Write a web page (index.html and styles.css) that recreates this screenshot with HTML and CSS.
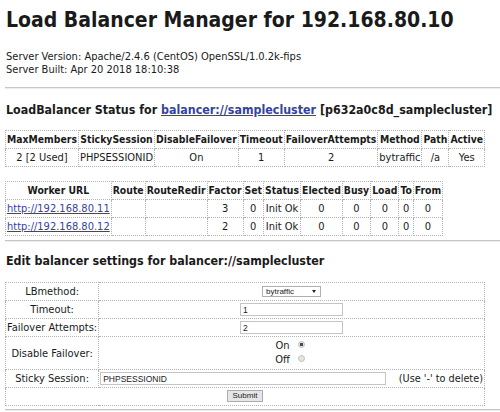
FILE: index.html
```html
<!DOCTYPE html>
<html>
<head>
<meta charset="utf-8">
<title>Balancer Manager</title>
<link rel="stylesheet" href="styles.css">
</head>
<body>
<h1 class="title">Load Balancer Manager for 192.168.80.10</h1>
<div class="info">
  <div>Server Version: Apache/2.4.6 (CentOS) OpenSSL/1.0.2k-fips</div>
  <div>Server Built: Apr 20 2018 18:10:38</div>
</div>
<hr class="rule rule-top">
<h3 class="section">LoadBalancer Status for <a href="#">balancer://samplecluster</a> [p632a0c8d_samplecluster]</h3>
<table class="grid status">
  <tr><th>MaxMembers</th><th>StickySession</th><th>DisableFailover</th><th>Timeout</th><th>FailoverAttempts</th><th>Method</th><th>Path</th><th>Active</th></tr>
  <tr><td>2 [2 Used]</td><td>PHPSESSIONID</td><td>On</td><td>1</td><td>2</td><td>bytraffic</td><td>/a</td><td>Yes</td></tr>
</table>
<table class="grid workers">
  <tr><th>Worker URL</th><th>Route</th><th>RouteRedir</th><th>Factor</th><th>Set</th><th>Status</th><th>Elected</th><th>Busy</th><th>Load</th><th>To</th><th>From</th></tr>
  <tr><td><a href="#">http://192.168.80.11</a></td><td></td><td></td><td>3</td><td>0</td><td>Init Ok</td><td>0</td><td>0</td><td>0</td><td>0</td><td>0</td></tr>
  <tr><td><a href="#">http://192.168.80.12</a></td><td></td><td></td><td>2</td><td>0</td><td>Init Ok</td><td>0</td><td>0</td><td>0</td><td>0</td><td>0</td></tr>
</table>
<hr class="rule rule-mid">
<h3 class="section section-edit">Edit balancer settings for balancer://samplecluster</h3>
<form class="editform" action="#">
<table class="grid edit">
  <tr><td>LBmethod:</td><td><span class="sel"><select class="select"><option>bytraffic</option></select></span></td></tr>
  <tr><td>Timeout:</td><td><input class="field field-short" type="text" value="1"></td></tr>
  <tr><td>Failover Attempts:</td><td><input class="field field-short" type="text" value="2"></td></tr>
  <tr><td>Disable Failover:</td><td><span class="radioline"><label for="sf1">On</label> <input class="radio" type="radio" name="sf" id="sf1" checked></span><span class="radioline"><label for="sf0">Off</label> <input class="radio" type="radio" name="sf" id="sf0"></span></td></tr>
  <tr><td>Sticky Session:</td><td><input class="field field-long" type="text" value="PHPSESSIONID">&nbsp;&nbsp;&nbsp;&nbsp;<span class="note">(Use '-' to delete)</span></td></tr>
  <tr><td colspan="2"><input class="submit" type="submit" value="Submit"></td></tr>
</table>
</form>
<hr class="rule rule-bottom">
</body>
</html>
```
FILE: styles.css
```css
html {
  background: #ffffff;
}
body {
  margin: 0 0 0 5px;
  font-family: "DejaVu Sans Condensed", "DejaVu Sans", sans-serif;
  font-stretch: condensed;
  font-size: 11px;
  line-height: 13px;
  color: #1a1a1a;
}
a {
  color: #34449c;
}
.title {
  font-size: 21px;
  line-height: 24px;
  font-weight: bold;
  margin: 8px 0 0 1px;
}
.info {
  margin: 18px 0 0 1px;
}
.rule {
  height: 0;
  border: 0;
  border-top: 1px solid #c6c6c6;
  border-bottom: 1px solid #ececec;
  margin: 0;
}
.rule-top {
  margin-top: 11px;
}
.rule-mid {
  margin-top: 4px;
}
.rule-bottom {
  margin-top: 3px;
}
.section {
  font-size: 12.35px;
  line-height: 15px;
  font-weight: bold;
  margin: 14px 0 0 1px;
}
.section-edit {
  margin-top: 12px;
}
.grid {
  border-collapse: collapse;
  border: 1px dotted #b4b4b4;
  text-align: center;
}
.grid th,
.grid td {
  border: 1px dotted #b4b4b4;
  padding: 2px 1px;
  white-space: nowrap;
}
.grid th {
  font-weight: bold;
  font-size: 10.35px;
}
.status {
  margin-top: 12px;
}
.workers {
  margin-top: 14px;
}
.editform {
  margin: 13px 0 0 0;
}
.edit td {
  vertical-align: middle;
}
.note {
  font-size: 10.8px;
}
.sel {
  position: relative;
  display: inline-block;
  vertical-align: top;
  margin-top: 1px;
}
.sel::after {
  content: "";
  position: absolute;
  right: 5px;
  top: 4px;
  border-left: 2.5px solid transparent;
  border-right: 2.5px solid transparent;
  border-top: 3px solid #222;
}
.select {
  -webkit-appearance: none;
  appearance: none;
  display: block;
  box-sizing: border-box;
  width: 59px;
  height: 11px;
  margin: 0;
  padding: 0 0 0 3px;
  border: 1px solid #b0b0b0;
  border-radius: 0;
  background: #ffffff;
  font-family: "Liberation Sans", Arial, sans-serif;
  font-size: 8px;
  line-height: 9px;
  color: #222;
}
.field {
  box-sizing: border-box;
  height: 13px;
  margin: 0;
  padding: 0 2px;
  border: 1px solid #c4c4c4;
  border-radius: 0;
  background: #fff;
  font-family: "Liberation Sans", Arial, sans-serif;
  font-size: 8.5px;
  color: #222;
  vertical-align: top;
}
.field-short {
  width: 103px;
}
.field-long {
  width: 286px;
}
.radioline {
  display: block;
  line-height: 14px;
}
.radio {
  -webkit-appearance: none;
  appearance: none;
  box-sizing: border-box;
  width: 7px;
  height: 7px;
  margin: 0 3px 0 5px;
  border: 1px solid #c0c0c0;
  border-radius: 50%;
  background: #e4e4e4;
  vertical-align: 1px;
}
.radio:checked {
  background: radial-gradient(circle, #4a4a4a 0 1.4px, #e4e4e4 1.9px);
}
.submit {
  box-sizing: border-box;
  width: 36px;
  height: 12px;
  margin: 0;
  padding: 0;
  border: 1px solid #adadad;
  border-radius: 0;
  background: #e6e6e6;
  font-family: "Liberation Sans", Arial, sans-serif;
  font-size: 8px;
  line-height: 10px;
  color: #222;
  vertical-align: top;
}
```
